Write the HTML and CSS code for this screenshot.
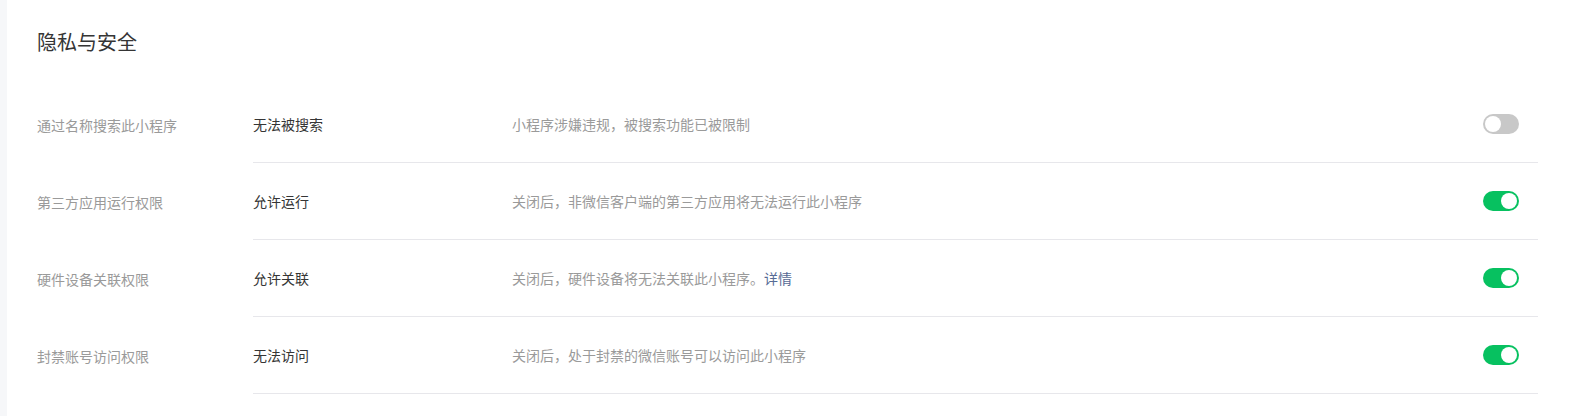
FILE: index.html
```html
<!DOCTYPE html>
<html lang="zh-CN">
<head>
    <meta charset="UTF-8">
    <meta name="viewport" content="width=device-width, initial-scale=1.0">
    <title>隐私与安全</title>
    <link rel="stylesheet" href="styles.css">
</head>
<body>
    <div class="page">
        <h2 class="title">隐私与安全</h2>

        <div class="row">
            <div class="label">通过名称搜索此小程序</div>
            <div class="content">
                <div class="value">无法被搜索</div>
                <div class="desc">小程序涉嫌违规，被搜索功能已被限制</div>
                <span class="switch"></span>
            </div>
        </div>

        <div class="row">
            <div class="label">第三方应用运行权限</div>
            <div class="content">
                <div class="value">允许运行</div>
                <div class="desc">关闭后，非微信客户端的第三方应用将无法运行此小程序</div>
                <span class="switch on"></span>
            </div>
        </div>

        <div class="row">
            <div class="label">硬件设备关联权限</div>
            <div class="content">
                <div class="value">允许关联</div>
                <div class="desc">关闭后，硬件设备将无法关联此小程序。<a href="#" class="link">详情</a></div>
                <span class="switch on"></span>
            </div>
        </div>

        <div class="row">
            <div class="label">封禁账号访问权限</div>
            <div class="content">
                <div class="value">无法访问</div>
                <div class="desc">关闭后，处于封禁的微信账号可以访问此小程序</div>
                <span class="switch on"></span>
            </div>
        </div>
    </div>
</body>
</html>
```

FILE: styles.css
```css
body {
    margin: 0;
    padding: 0;
    background: #fff;
    font-family: "Noto Sans CJK SC", "Liberation Sans", sans-serif;
    color: #353535;
}
.page {
    border-left: 7px solid #f6f7f9;
    padding: 30px 31px 0 30px;
    height: 386px;
}
.title {
    margin: 0 0 32px;
    font-size: 20px;
    font-weight: normal;
    line-height: 24px;
    color: #353535;
}
.row {
    display: flex;
    align-items: stretch;
}
.label {
    width: 216px;
    flex-shrink: 0;
    font-size: 14px;
    color: #9a9a9a;
    display: flex;
    align-items: center;
}
.content {
    flex: 1;
    display: flex;
    align-items: center;
    height: 76px;
    padding-right: 19px;
    border-bottom: 1px solid #e7e7eb;
    font-size: 14px;
}
.value {
    width: 259px;
    flex-shrink: 0;
    color: #353535;
}
.desc {
    flex: 1;
    color: #9a9a9a;
}
.link {
    color: #576b95;
    text-decoration: none;
}
.switch {
    position: relative;
    width: 36px;
    height: 20px;
    border-radius: 10px;
    background: #c8c8c8;
}
.switch::after {
    content: "";
    position: absolute;
    top: 2px;
    left: 2px;
    width: 16px;
    height: 16px;
    border-radius: 50%;
    background: #fff;
}
.switch.on {
    background: #07c160;
}
.switch.on::after {
    left: 18px;
}
```
